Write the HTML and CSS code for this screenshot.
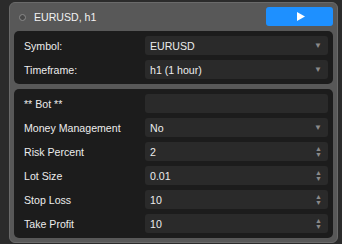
FILE: index.html
```html
<!DOCTYPE html>
<html lang="en">
<head>
  <meta charset="UTF-8" />
  <title>EURUSD, h1</title>
  <link rel="stylesheet" href="styles.css">
</head>
<body>
  <div class="panel">
    <div class="header">
      <span class="status-dot"></span>
      <span class="title">EURUSD, h1</span>
      <button class="play-btn">
        <svg width="8" height="9" viewBox="0 0 8 9"><path d="M0 0 L8 4.5 L0 9 Z" fill="#fff"/></svg>
      </button>
    </div>

    <div class="section">
      <div class="label">Symbol:</div>
      <div class="field select"><span>EURUSD</span><span class="arrow">&#9660;</span></div>
      <div class="label">Timeframe:</div>
      <div class="field select"><span>h1 (1 hour)</span><span class="arrow">&#9660;</span></div>
    </div>

    <div class="section">
      <div class="label">** Bot **</div>
      <div class="field"></div>
      <div class="label">Money Management</div>
      <div class="field select"><span>No</span><span class="arrow">&#9660;</span></div>
      <div class="label">Risk Percent</div>
      <div class="field number"><span>2</span><span class="spin"><i>&#9650;</i><i>&#9660;</i></span></div>
      <div class="label">Lot Size</div>
      <div class="field number"><span>0.01</span><span class="spin"><i>&#9650;</i><i>&#9660;</i></span></div>
      <div class="label">Stop Loss</div>
      <div class="field number"><span>10</span><span class="spin"><i>&#9650;</i><i>&#9660;</i></span></div>
      <div class="label">Take Profit</div>
      <div class="field number"><span>10</span><span class="spin"><i>&#9650;</i><i>&#9660;</i></span></div>
    </div>
  </div>
</body>
</html>
```

FILE: styles.css
```css
:root {
  --page-bg: #2b2b2b;
  --panel: #585858;
  --panel-edge: #6a6a6a;
  --section: #1c1c1c;
  --field: #2a2a2a;
  --text: #ececec;
  --muted: #8a8a8a;
  --blue: #1e90ff;
}

body {
  margin: 0;
  background: var(--page-bg);
  font-family: 'Liberation Sans', Arial, sans-serif;
  font-size: 10.6px;
  color: var(--text);
}

.panel {
  margin: 2px 0 0 9px;
  width: 329px;
  height: 241px;
  box-sizing: border-box;
  background: var(--panel);
  border: 1px solid var(--panel-edge);
  border-radius: 6px;
  padding: 0 4px 5px 4px;
}

.header {
  display: flex;
  align-items: center;
  height: 28px;
}

.status-dot {
  width: 5px;
  height: 5px;
  border-radius: 50%;
  background: #484848;
  border: 1px solid #8a8a8a;
  margin: 0 8px 0 5px;
}

.title {
  flex: 1;
  color: #f2f2f2;
}

.play-btn {
  width: 67px;
  height: 19px;
  border: none;
  border-radius: 3px;
  background: var(--blue);
  display: flex;
  align-items: center;
  justify-content: center;
  padding: 0 0 0 2px;
  margin-bottom: 1px;
}

.section {
  background: var(--section);
  border-radius: 5px;
  padding: 5px 5px 5px 10px;
  display: grid;
  grid-template-columns: 1fr 183px;
  row-gap: 5px;
  align-items: center;
}
.section + .section {
  margin-top: 5px;
}

.field {
  height: 19px;
  background: var(--field);
  border-radius: 3px;
  display: flex;
  align-items: center;
  justify-content: space-between;
  padding: 0 5px;
  box-sizing: border-box;
}

.arrow {
  color: var(--muted);
  font-size: 8px;
  margin-right: 1px;
}

.spin {
  display: flex;
  flex-direction: column;
  color: var(--muted);
  font-size: 7px;
  line-height: 6px;
  margin-right: 1px;
}
.spin i {
  font-style: normal;
}
```
